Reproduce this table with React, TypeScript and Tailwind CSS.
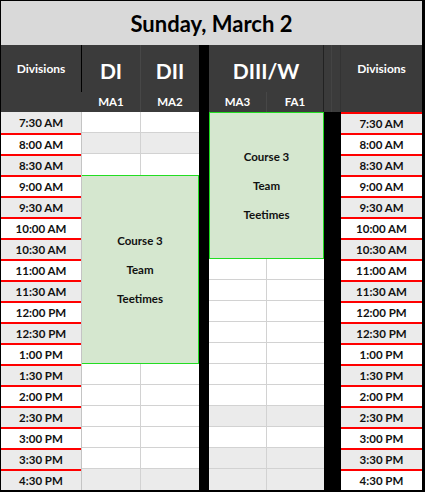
import React from "react";

const times = [
  "7:30 AM", "8:00 AM", "8:30 AM", "9:00 AM", "9:30 AM", "10:00 AM",
  "10:30 AM", "11:00 AM", "11:30 AM", "12:00 PM", "12:30 PM", "1:00 PM",
  "1:30 PM", "2:00 PM", "2:30 PM", "3:00 PM", "3:30 PM", "4:30 PM",
];

const font = { fontFamily: "Lato, 'Liberation Sans', sans-serif" };

function TimeCol({ side }: { side: "left" | "right" }) {
  return (
    <div className={side === "left" ? "flex w-[81px] flex-col border-r border-[#c4c4c4]" : "flex w-[81px] flex-col"}>
      {times.map((t, i) => {
        const gray = i === 17 ? side === "left" : i % 2 === 0;
        const red = side === "right" || i > 0;
        return (
          <div
            key={t}
            className={
              "flex h-[21px] items-center justify-center text-[11.5px] font-bold text-[#111] " +
              (gray ? "bg-[#ebebeb] " : "bg-white ") +
              (red ? "border-t-2 border-[#ff0000]" : "")
            }
          >
            {t}
          </div>
        );
      })}
    </div>
  );
}

function GridRow({ gray, left, last }: { gray: boolean; left: number; last?: boolean }) {
  return (
    <div
      className={
        "flex h-[21px] " +
        (gray ? "bg-[#ebebeb] " : "bg-white ") +
        (last ? "" : "border-b border-[#d2d2d2]")
      }
    >
      <div className={left === 59 ? "w-[59px] border-r border-[#d2d2d2]" : "w-[58px] border-r border-[#d2d2d2]"} />
      <div className="flex-1" />
    </div>
  );
}

function Block({ cls }: { cls: string }) {
  return (
    <div className={"flex flex-col items-center justify-center gap-[12px] bg-[#d5e7cf] text-[11.5px] font-bold text-[#111] " + cls}>
      <div>Course 3</div>
      <div>Team</div>
      <div>Teetimes</div>
    </div>
  );
}

export default function App() {
  return (
    <div style={font} className="h-[492px] w-[425px] bg-black pb-[2px] pl-[1px] pr-[3px] pt-[1px]">
      {/* Title */}
      <div className="flex h-[44px] items-center justify-center bg-[#d9d9d9] text-[22px] font-bold text-black">
        Sunday, March 2
      </div>

      {/* Header */}
      <div className="flex h-[67px] bg-[#3b3b3b] font-bold text-white">
        <div className="flex w-[81px] flex-col">
          <div className="flex h-[47px] items-center justify-center border-r border-black text-[12px]">Divisions</div>
          <div className="flex-1" />
        </div>
        <div className="flex w-[117px] flex-col">
          <div className="flex h-[47px] text-[21px]">
            <div className="flex w-[59px] items-center justify-center border-r border-[#474747] pt-[5px]">DI</div>
            <div className="flex flex-1 items-center justify-center pt-[5px]">DII</div>
          </div>
          <div className="flex flex-1 text-[11.5px]">
            <div className="flex w-[59px] items-center justify-center border-r border-[#474747]">MA1</div>
            <div className="flex flex-1 items-center justify-center">MA2</div>
          </div>
        </div>
        <div className="w-[10px] bg-black" />
        <div className="flex w-[115px] flex-col border-r border-[#222]">
          <div className="flex h-[47px] items-center justify-center pt-[5px] text-[21px]">DIII/W</div>
          <div className="flex flex-1 text-[11.5px]">
            <div className="flex w-[58px] items-center justify-center border-r border-[#474747]">MA3</div>
            <div className="flex flex-1 items-center justify-center">FA1</div>
          </div>
        </div>
        <div className="flex w-[17px]">
          <div className="w-[8px] border-r border-[#444]" />
          <div className="flex-1 border-r border-[#333]" />
        </div>
        <div className="flex w-[81px] flex-col">
          <div className="flex h-[47px] items-center justify-center text-[12px]">Divisions</div>
          <div className="flex-1" />
        </div>
      </div>

      {/* Body */}
      <div className="flex h-[378px]">
        <TimeCol side="left" />
        <div className="flex w-[117px] flex-col">
          <GridRow gray={false} left={59} />
          <GridRow gray={true} left={59} />
          <div className="flex h-[21px] bg-white">
            <div className="w-[59px] border-r border-[#d2d2d2]" />
            <div className="flex-1" />
          </div>
          <Block cls="h-[189px] border-b border-r border-t border-[#22dd22]" />
          <GridRow gray={false} left={59} />
          <GridRow gray={false} left={59} />
          <GridRow gray={false} left={59} />
          <GridRow gray={false} left={59} />
          <GridRow gray={false} left={59} />
          <GridRow gray={true} left={59} last />
        </div>
        <div className="w-[10px] bg-black" />
        <div className="flex w-[115px] flex-col">
          <Block cls="h-[147px] border border-[#22dd22]" />
          <GridRow gray={false} left={58} />
          <GridRow gray={false} left={58} />
          <GridRow gray={false} left={58} />
          <GridRow gray={false} left={58} />
          <GridRow gray={false} left={58} />
          <GridRow gray={false} left={58} />
          <GridRow gray={false} left={58} />
          <GridRow gray={true} left={58} />
          <GridRow gray={false} left={58} />
          <GridRow gray={true} left={58} />
          <GridRow gray={true} left={58} last />
        </div>
        <div className="w-[17px] bg-black" />
        <TimeCol side="right" />
      </div>
    </div>
  );
}
